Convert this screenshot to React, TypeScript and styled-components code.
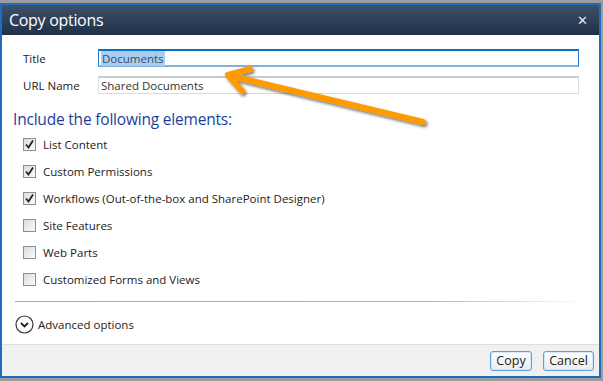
import React from "react";
import styled, { createGlobalStyle } from "styled-components";

const Global = createGlobalStyle`
  html, body { margin: 0; padding: 0; }
  body {
    background: #9c9c9c;
    font-family: "Open Sans", "Noto Sans", sans-serif;
    width: 603px;
    height: 381px;
    overflow: hidden;
  }
`;

const Page = styled.div`
  position: relative;
  width: 603px;
  height: 381px;
  padding-top: 3px;
  box-sizing: border-box;
`;

const Dialog = styled.div`
  width: 601px;
  height: 375px;
  box-sizing: border-box;
  border: 2px solid #1f6cbf;
  display: flex;
  flex-direction: column;
  background: #fff;
`;

const TitleBar = styled.div`
  height: 30px;
  flex: none;
  background: linear-gradient(#3e5169, #1f3047);
  display: flex;
  align-items: center;
  justify-content: space-between;
  padding: 0 11px 0 7px;
`;

const TitleText = styled.div`
  color: #fff;
  font-size: 16px;
  letter-spacing: -0.3px;
  margin-top: -1px;
`;

const Close = styled.div`
  color: #e8e8e8;
  font-size: 13px;
  font-weight: bold;
  font-family: "DejaVu Sans", sans-serif;
`;

const Body = styled.div`
  flex: 1;
  display: flex;
  flex-direction: column;
  padding: 14px 0 0 0;
`;

const FormGrid = styled.div`
  display: grid;
  grid-template-columns: 75px 481px;
  row-gap: 9px;
  padding-left: 21px;
  align-items: center;
`;

const Label = styled.div`
  font-size: 11.5px;
  color: #222;
`;

const Input = styled.div<{ $active?: boolean }>`
  height: 18px;
  box-sizing: border-box;
  border: 1px solid ${(p) => (p.$active ? "#2a7ccc" : "#d8dbe0")};
  border-top: 2px solid ${(p) => (p.$active ? "#0a6ec6" : "#c9c9cf")};
  ${(p) => (p.$active ? "border-bottom: 2px solid #7fb2e0;" : "")}
  font-size: 11.5px;
  color: #333;
  display: flex;
  align-items: center;
  padding-left: 2px;
`;

const Selected = styled.span`
  background: #a9cdf0;
  color: #2f4f6f;
  padding: 0 1px;
`;

const Heading = styled.div`
  color: #1a3e9e;
  font-size: 15.5px;
  margin: 14px 0 0 11px;
  letter-spacing: -0.2px;
`;

const List = styled.div`
  display: flex;
  flex-direction: column;
  gap: 14px;
  padding: 8px 0 0 21px;
`;

const Row = styled.label`
  display: flex;
  align-items: center;
  gap: 7px;
  height: 13px;
  font-size: 11.5px;
  color: #222;
`;

const Box = styled.span`
  width: 13px;
  height: 13px;
  box-sizing: border-box;
  border: 1px solid #8e8f8f;
  background: linear-gradient(135deg, #dcdcdc, #fbfbfb);
  display: flex;
  align-items: center;
  justify-content: center;
`;

const Separator = styled.div`
  height: 1px;
  margin: 15px 9px 0 13px;
  background: linear-gradient(90deg, #a8a8a8 0%, #b0b0b0 70%, #fff 100%);
`;

const Advanced = styled.div`
  display: flex;
  align-items: center;
  gap: 4px;
  margin: 13px 0 0 13px;
  font-size: 11.5px;
  color: #222;
`;

const Footer = styled.div`
  height: 31px;
  flex: none;
  background: #f0f0f0;
  border-top: 1px solid #dedede;
  display: flex;
  justify-content: flex-end;
  align-items: center;
  gap: 11px;
  padding-right: 5px;
`;

const Button = styled.div<{ $w: number }>`
  width: ${(p) => p.$w}px;
  height: 20px;
  box-sizing: border-box;
  border: 1px solid #5e9fdc;
  border-radius: 3px;
  background: linear-gradient(#ffffff, #e9ecef);
  box-shadow: inset 0 0 0 1px #d6e8f8;
  font-size: 12.5px;
  color: #222;
  display: flex;
  align-items: center;
  justify-content: center;
`;

const Arrow = styled.svg`
  position: absolute;
  left: 0;
  top: 0;
  pointer-events: none;
`;

const Check = () => (
  <svg width="11" height="11" viewBox="0 0 11 11">
    <path d="M2 5.5 L4.5 8.5 L9 1.5" fill="none" stroke="#222" strokeWidth="1.8" />
  </svg>
);

const items: [string, boolean][] = [
  ["List Content", true],
  ["Custom Permissions", true],
  ["Workflows (Out-of-the-box and SharePoint Designer)", true],
  ["Site Features", false],
  ["Web Parts", false],
  ["Customized Forms and Views", false],
];

export default function App() {
  return (
    <Page>
      <Global />
      <Dialog>
        <TitleBar>
          <TitleText>Copy options</TitleText>
          <Close>✕</Close>
        </TitleBar>
        <Body>
          <FormGrid>
            <Label>Title</Label>
            <Input $active>
              <Selected>Documents</Selected>
            </Input>
            <Label>URL Name</Label>
            <Input>Shared Documents</Input>
          </FormGrid>
          <Heading>Include the following elements:</Heading>
          <List>
            {items.map(([t, c]) => (
              <Row key={t}>
                <Box>{c && <Check />}</Box>
                {t}
              </Row>
            ))}
          </List>
          <Separator />
          <Advanced>
            <svg width="19" height="19" viewBox="0 0 19 19">
              <circle cx="9.5" cy="9.5" r="8.5" fill="none" stroke="#333" strokeWidth="1.2" />
              <path d="M6 8 L9.5 11.5 L13 8" fill="none" stroke="#222" strokeWidth="1.8" />
            </svg>
            Advanced options
          </Advanced>
        </Body>
        <Footer>
          <Button $w={42}>Copy</Button>
          <Button $w={51}>Cancel</Button>
        </Footer>
      </Dialog>
      <Arrow width="603" height="381" viewBox="0 0 603 381">
        <defs>
          <filter id="sh" x="-10%" y="-50%" width="120%" height="200%">
            <feDropShadow dx="1.5" dy="2" stdDeviation="1.5" floodColor="#000" floodOpacity="0.55" />
          </filter>
        </defs>
        <g filter="url(#sh)" stroke="#ff9a00" strokeWidth="6" strokeLinecap="round" strokeLinejoin="round" fill="none">
          <path d="M423 122 L231 76" />
          <path d="M250 69 L228 75 L242 91" />
        </g>
      </Arrow>
    </Page>
  );
}
